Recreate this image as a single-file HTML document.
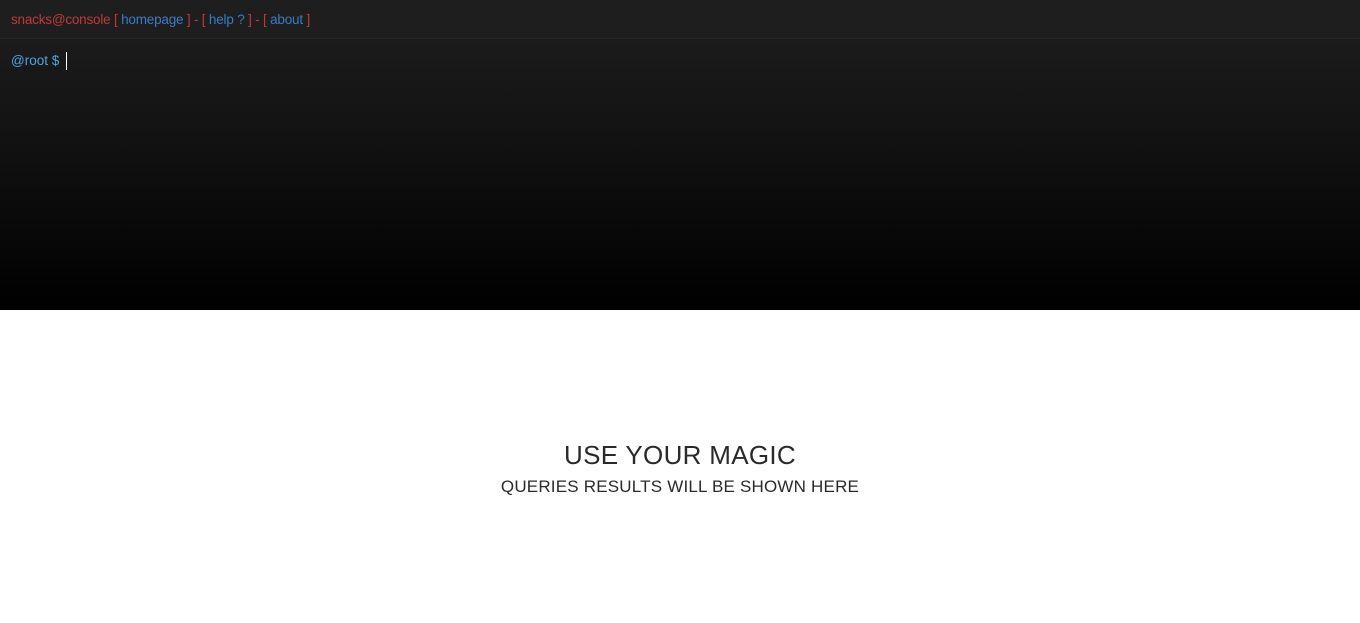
<!DOCTYPE html>
<html><head><style>
html,body{margin:0;padding:0;width:1360px;height:623px;overflow:hidden;background:#fff;font-family:"Liberation Sans",sans-serif}
#top{position:absolute;left:0;top:0;width:1360px;height:310px;background:linear-gradient(#1b1b1b 40px,#141414 120px,#000 310px)}
#hdr{height:38px;background:#1e1e1e;border-bottom:1px solid #262626;font-size:13.5px;line-height:40px;padding-left:11px;color:#c0393b;letter-spacing:-0.2px}
#hdr .b{color:#3a7bc8}
#prompt{position:absolute;left:11px;top:53px;font-size:13.5px;color:#4ea6e0}
#cur{position:absolute;left:66px;top:52px;width:1px;height:18px;background:#fff}
#h1{position:absolute;left:0;width:1360px;top:440px;text-align:center;font-size:26px;color:#2a2a2a;letter-spacing:0.3px}
#h2{position:absolute;left:0;width:1360px;top:477px;text-align:center;font-size:17px;color:#2a2a2a;letter-spacing:0.2px}
</style></head><body>
<div id="top">
<div id="hdr">snacks@console [ <span class="b">homepage</span> ] - [ <span class="b">help ?</span> ] - [ <span class="b">about</span> ]</div>
<div id="prompt">@root $</div><div id="cur"></div>
</div>
<div id="h1">USE YOUR MAGIC</div>
<div id="h2">QUERIES RESULTS WILL BE SHOWN HERE</div>
</body></html>
